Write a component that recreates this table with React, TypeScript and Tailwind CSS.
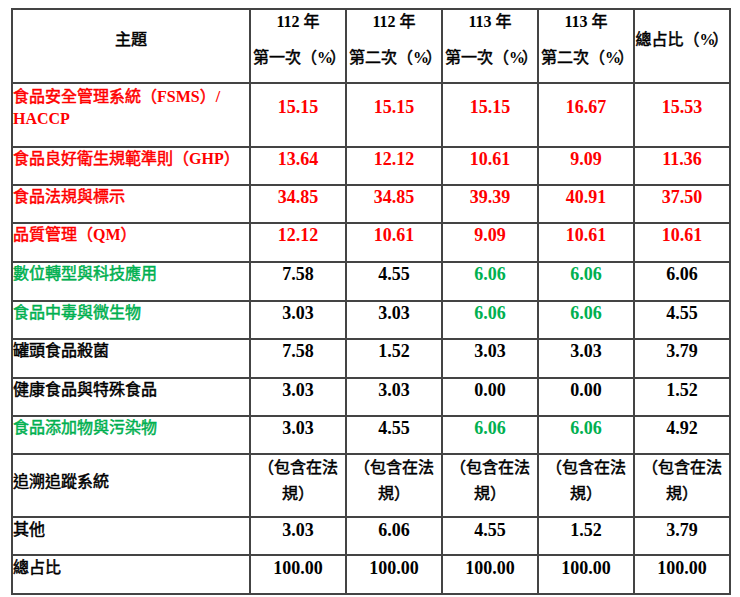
import React from "react";

const RED = "text-[#ff0000]";
const GREEN = "text-[#00b050]";
const BLACK = "text-black";

type Row = {
  label: string;
  labelColor: string;
  values: [string, string][];
};

const r = (v: string) => [v, RED] as [string, string];
const g = (v: string) => [v, GREEN] as [string, string];
const b = (v: string) => [v, BLACK] as [string, string];

const rows: Row[] = [
  { label: "食品良好衛生規範準則（GHP）", labelColor: RED, values: [r("13.64"), r("12.12"), r("10.61"), r("9.09"), r("11.36")] },
  { label: "食品法規與標示", labelColor: RED, values: [r("34.85"), r("34.85"), r("39.39"), r("40.91"), r("37.50")] },
  { label: "品質管理（QM）", labelColor: RED, values: [r("12.12"), r("10.61"), r("9.09"), r("10.61"), r("10.61")] },
  { label: "數位轉型與科技應用", labelColor: GREEN, values: [b("7.58"), b("4.55"), g("6.06"), g("6.06"), b("6.06")] },
  { label: "食品中毒與微生物", labelColor: GREEN, values: [b("3.03"), b("3.03"), g("6.06"), g("6.06"), b("4.55")] },
  { label: "罐頭食品殺菌", labelColor: BLACK, values: [b("7.58"), b("1.52"), b("3.03"), b("3.03"), b("3.79")] },
  { label: "健康食品與特殊食品", labelColor: BLACK, values: [b("3.03"), b("3.03"), b("0.00"), b("0.00"), b("1.52")] },
  { label: "食品添加物與污染物", labelColor: GREEN, values: [b("3.03"), b("4.55"), g("6.06"), g("6.06"), b("4.92")] },
];

const tail: Row[] = [
  { label: "其他", labelColor: BLACK, values: [b("3.03"), b("6.06"), b("4.55"), b("1.52"), b("3.79")] },
  { label: "總占比", labelColor: BLACK, values: [b("100.00"), b("100.00"), b("100.00"), b("100.00"), b("100.00")] },
];

const headers = [
  ["112", "第一次"],
  ["112", "第二次"],
  ["113", "第一次"],
  ["113", "第二次"],
];

// Latin runs bold (no stroke), CJK runs regular with a light stroke
function Mixed({ text }: { text: string }) {
  const parts = text.split(/([A-Za-z0-9%./ ]+)/).filter((p) => p.length > 0);
  return (
    <>
      {parts.map((p, i) =>
        /^[A-Za-z0-9%./ ]+$/.test(p) ? (
          <span key={i} className="font-bold [-webkit-text-stroke:0px]">
            {p}
          </span>
        ) : (
          <span key={i}>{p}</span>
        )
      )}
    </>
  );
}

function Pct() {
  return (
    <>
      （<span className="font-bold tracking-[-3px] [-webkit-text-stroke:0px]">%</span>）
    </>
  );
}

function NumSpan({ v }: { v: string }) {
  return <span className="text-[18px] font-bold [-webkit-text-stroke:0px]">{v}</span>;
}

export default function App() {
  return (
    <div
      className="min-h-[597px] bg-white pl-[11px] pt-[8px] text-[16px] font-normal text-black [-webkit-text-stroke:0.5px]"
      style={{ fontFamily: '"Liberation Serif", "Noto Sans CJK TC", serif' }}
    >
      <div className="grid w-fit gap-[2px] bg-[#444] p-[2px] grid-cols-[236px_94px_94px_94px_94px_94px] grid-rows-[72px_62px_36px_36px_37px_37px_36px_37px_36px_36px_61px_36px_37px]">
        {/* header */}
        <div className="bg-white pt-[18px] text-center leading-[24px]">主題</div>
        {headers.map(([a, c], i) => (
          <div key={i} className="flex flex-col items-center bg-white leading-[24px] whitespace-nowrap">
            <div>
              <span className="font-bold [-webkit-text-stroke:0px]">{a}</span> 年
            </div>
            <div className="mt-[12px] pl-[3px]">
              {c}
              <Pct />
            </div>
          </div>
        ))}
        <div className="bg-white pt-[18px] text-center leading-[24px] whitespace-nowrap">
          總占比
          <Pct />
        </div>

        {/* row 1 */}
        <div className={`bg-white pt-[2px] leading-[22px] ${RED}`}>
          <Mixed text="食品安全管理系統（FSMS）/" />
          <br />
          <Mixed text="HACCP" />
        </div>
        {["15.15", "15.15", "15.15", "16.67", "15.53"].map((v, i) => (
          <div key={i} className={`bg-white pt-[12px] text-center leading-[22px] ${RED}`}>
            <NumSpan v={v} />
          </div>
        ))}

        {rows.map((row, ri) => (
          <React.Fragment key={ri}>
            <div className={`bg-white leading-[22px] ${row.labelColor}`}>
              <Mixed text={row.label} />
            </div>
            {row.values.map(([v, c], i) => (
              <div key={i} className={`bg-white text-center leading-[22px] ${c}`}>
                <NumSpan v={v} />
              </div>
            ))}
          </React.Fragment>
        ))}

        {/* traceability */}
        <div className="bg-white pt-[16px] leading-[22px]">追溯追蹤系統</div>
        {[0, 1, 2, 3, 4].map((i) => (
          <div key={i} className="bg-white text-center leading-[26px]">
            （包含在法
            <br />
            規）
          </div>
        ))}

        {tail.map((row, ri) => (
          <React.Fragment key={ri}>
            <div className={`bg-white pt-[1px] leading-[22px] ${row.labelColor}`}>
              <Mixed text={row.label} />
            </div>
            {row.values.map(([v, c], i) => (
              <div key={i} className={`bg-white pt-[1px] text-center leading-[22px] ${c}`}>
                <NumSpan v={v} />
              </div>
            ))}
          </React.Fragment>
        ))}
      </div>
    </div>
  );
}
